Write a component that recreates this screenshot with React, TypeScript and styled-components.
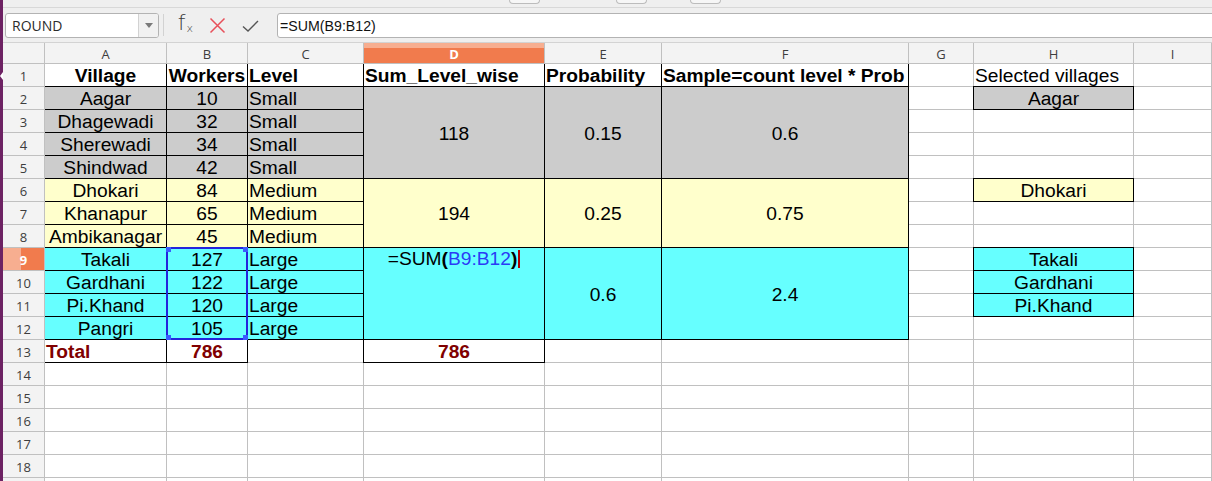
import React from "react";
import styled, { createGlobalStyle, css } from "styled-components";

const GlobalStyle = createGlobalStyle`
  html, body {
    margin: 0;
    padding: 0;
  }
  body {
    font-family: "Liberation Sans", Arial, sans-serif;
    background: #efefef;
    overflow: hidden;
  }
`;

const GRAY = "#cccccc";
const YELLOW = "#ffffcc";
const CYAN = "#66ffff";
const WHITE = "#ffffff";
const LINE = "#c0c0c0";

const Window = styled.div`
  display: flex;
  width: 1212px;
  height: 481px;
  overflow: hidden;
`;

const Launcher = styled.div`
  flex: none;
  width: 3px;
  background: #6d2263;
  display: flex;
  flex-direction: column;
`;

const LauncherArrow = styled.div`
  margin-top: 72px;
  width: 0;
  height: 0;
  border-top: 4px solid transparent;
  border-bottom: 4px solid transparent;
  border-right: 3px solid #ffffff;
`;

const Main = styled.div`
  flex: 1;
  min-width: 0;
  display: flex;
  flex-direction: column;
`;

const Toolbar = styled.div`
  flex: none;
  height: 7px;
  border-bottom: 1px solid #d8d8d8;
  display: flex;
  align-items: flex-start;
`;

const ToolStub = styled.div<{ $offset: number }>`
  margin-left: ${({ $offset }) => $offset}px;
  width: 31px;
  height: 4px;
  box-sizing: border-box;
  border: 1px solid #bcbcbc;
  border-top: none;
  border-radius: 0 0 4px 4px;
  background: #f6f6f6;
`;

const FormulaBar = styled.div`
  flex: none;
  height: 34px;
  border-bottom: 1px solid #d3d3d3;
  display: flex;
  align-items: center;
  padding-left: 2px;
`;

const NameBox = styled.div`
  flex: none;
  width: 154px;
  height: 25px;
  box-sizing: border-box;
  border: 1px solid #b3b3b3;
  border-radius: 3px;
  background: #ffffff;
  display: flex;
  overflow: hidden;
`;

const NameText = styled.div`
  flex: 1;
  padding-left: 6px;
  font-family: "Open Sans", "Liberation Sans", sans-serif;
  font-size: 14px;
  line-height: 23px;
  color: #2b2b2b;
`;

const DropButton = styled.div`
  width: 19px;
  border-left: 1px solid #d2d2d2;
  background: #f1f1f1;
  display: flex;
  align-items: center;
  justify-content: center;
`;

const DropArrow = styled.div`
  width: 0;
  height: 0;
  border-left: 4px solid transparent;
  border-right: 4px solid transparent;
  border-top: 5px solid #7a7a7a;
`;

const Separator = styled.div`
  flex: none;
  width: 1px;
  height: 22px;
  margin-left: 4px;
  background: #d2d2d2;
`;

const IconSlot = styled.div<{ $offset: number }>`
  flex: none;
  width: 17px;
  height: 17px;
  margin-left: ${({ $offset }) => $offset}px;
  display: flex;
  align-items: center;
  justify-content: center;
`;

const FxGlyph = styled.span`
  font-family: "DejaVu Sans", sans-serif;
  font-weight: 200;
  font-size: 22px;
  line-height: 17px;
  color: #3c3c3c;
  white-space: nowrap;

  sub {
    font-size: 11px;
    vertical-align: -2px;
    margin-left: 1px;
  }
`;

const FormulaInput = styled.div`
  flex: 1;
  height: 25px;
  margin-left: 18px;
  margin-right: -4px;
  box-sizing: border-box;
  border: 1px solid #b3b3b3;
  border-radius: 3px;
  background: #ffffff;
  padding-left: 2px;
  font-size: 14.2px;
  line-height: 24px;
  color: #111111;
`;

const Sheet = styled.div`
  flex: none;
  display: grid;
  grid-template-columns: 42px 122px 81px 116px 181px 117px 247px 65px 160px 1fr;
  grid-template-rows: 21px repeat(19, 23px);
  background: #ffffff;
`;

const headerText = css`
  box-sizing: border-box;
  display: flex;
  align-items: center;
  justify-content: center;
  border-right: 1px solid ${LINE};
  border-bottom: 1px solid ${LINE};
  font-family: "Open Sans", "Liberation Sans", sans-serif;
  font-size: 13px;
`;

const Corner = styled.div`
  ${headerText};
  grid-row: 1;
  grid-column: 1;
  background: #f3f3f3;
`;

const ColHead = styled.div<{ $c: number; $active?: boolean }>`
  ${headerText};
  grid-row: 1;
  grid-column: ${({ $c }) => $c + 2};
  padding-top: 1px;
  background: ${({ $active }) =>
    $active
      ? "linear-gradient(to bottom, #f7ae90 0, #f7ae90 5px, #f17b4d 5px)"
      : "#f3f3f3"};
  color: ${({ $active }) => ($active ? "#ffffff" : "#3d3d3d")};
  font-weight: ${({ $active }) => ($active ? 700 : 400)};
`;

const RowHead = styled.div<{ $r: number; $active?: boolean }>`
  ${headerText};
  grid-row: ${({ $r }) => $r + 1};
  grid-column: 1;
  padding-top: 2px;
  background: ${({ $active }) =>
    $active
      ? "linear-gradient(to right, #f7ae90 0, #f7ae90 18px, #f17b4d 18px)"
      : "#f3f3f3"};
  color: ${({ $active }) => ($active ? "#ffffff" : "#3d3d3d")};
  font-weight: ${({ $active }) => ($active ? 700 : 400)};
`;

type Box = "edge" | "full";
type Align = "left" | "center";
type VAlign = "center" | "top";

const Cell = styled.div<{
  $r: number;
  $c: number;
  $span: number;
  $fill: string;
  $align: Align;
  $valign: VAlign;
  $bold?: boolean;
  $total?: boolean;
  $box?: Box;
}>`
  grid-row: ${({ $r }) => $r + 1} / span ${({ $span }) => $span};
  grid-column: ${({ $c }) => $c + 2};
  box-sizing: border-box;
  min-width: 0;
  display: flex;
  flex-direction: column;
  justify-content: ${({ $valign }) => ($valign === "top" ? "flex-start" : "center")};
  align-items: ${({ $align }) => ($align === "center" ? "center" : "flex-start")};
  padding: ${({ $valign }) => ($valign === "top" ? "0" : "2px")} 1px 0;
  background: ${({ $fill }) => $fill};
  border-right: 1px solid ${LINE};
  border-bottom: 1px solid ${LINE};
  font-size: 19.2px;
  line-height: 22px;
  font-weight: ${({ $bold }) => ($bold ? 700 : 400)};
  color: ${({ $total }) => ($total ? "#800000" : "#000000")};
  white-space: nowrap;
  overflow: hidden;

  ${({ $box }) =>
    $box === "edge" &&
    css`
      border-right-color: #000000;
      border-bottom-color: #000000;
    `}

  ${({ $box }) =>
    $box === "full" &&
    css`
      position: relative;
      z-index: 1;
      margin: -1px 0 0 -1px;
      border: 1px solid #000000;
    `}
`;

const Selection = styled.div`
  grid-row: 10 / span 4;
  grid-column: 3;
  position: relative;
  z-index: 2;
  margin: -1px 0 0 -1px;
  border: 2px solid #2424dc;
  pointer-events: none;
`;

const Handle = styled.span<{ $corner: "tl" | "tr" | "bl" | "br" }>`
  position: absolute;
  width: 5px;
  height: 5px;
  background: #3a5cff;
  ${({ $corner }) => ($corner[0] === "t" ? "top: -2px;" : "bottom: -2px;")}
  ${({ $corner }) => ($corner[1] === "l" ? "left: -2px;" : "right: -2px;")}
`;

const Paren = styled.span`
  font-weight: 700;
`;

const RangeRef = styled.span`
  color: #2b3cf5;
`;

const Caret = styled.span`
  display: inline-block;
  width: 2px;
  height: 18px;
  margin-left: 1px;
  vertical-align: -3px;
  background: #b00000;
`;

type Spec = {
  text?: React.ReactNode;
  span?: number;
  fill?: string;
  align?: Align;
  valign?: VAlign;
  bold?: boolean;
  total?: boolean;
  box?: Box;
};

const COLS = ["A", "B", "C", "D", "E", "F", "G", "H", "I"];
// the 19th row only peeks in at the bottom edge, its number is out of view
const ROWS = 19;
const LABELLED_ROWS = 18;

const villages: [string, number, string][] = [
  ["Aagar", 10, "Small"],
  ["Dhagewadi", 32, "Small"],
  ["Sherewadi", 34, "Small"],
  ["Shindwad", 42, "Small"],
  ["Dhokari", 84, "Medium"],
  ["Khanapur", 65, "Medium"],
  ["Ambikanagar", 45, "Medium"],
  ["Takali", 127, "Large"],
  ["Gardhani", 122, "Large"],
  ["Pi.Khand", 120, "Large"],
  ["Pangri", 105, "Large"],
];

const fillFor = (row: number) => (row <= 5 ? GRAY : row <= 8 ? YELLOW : CYAN);

const FormulaEdit = () => (
  <span>
    =SUM<Paren>(</Paren>
    <RangeRef>B9:B12</RangeRef>
    <Paren>)</Paren>
    <Caret />
  </span>
);

const groups = [
  { start: 2, span: 4, sum: "118" as React.ReactNode, prob: "0.15", sample: "0.6" },
  { start: 6, span: 3, sum: "194" as React.ReactNode, prob: "0.25", sample: "0.75" },
  { start: 9, span: 4, sum: <FormulaEdit />, prob: "0.6", sample: "2.4" },
];

const selected: Record<number, string> = {
  2: "Aagar",
  6: "Dhokari",
  9: "Takali",
  10: "Gardhani",
  11: "Pi.Khand",
};

function buildSpecs(): Record<string, Spec> {
  const specs: Record<string, Spec> = {};
  const head = (text: string, align: Align): Spec => ({ text, align, bold: true, box: "edge" });
  specs.A1 = head("Village", "center");
  specs.B1 = head("Workers", "center");
  specs.C1 = head("Level", "left");
  specs.D1 = head("Sum_Level_wise", "left");
  specs.E1 = head("Probability", "left");
  specs.F1 = head("Sample=count level * Prob", "left");
  specs.H1 = { text: "Selected villages" };

  villages.forEach(([name, workers, level], i) => {
    const row = i + 2;
    const fill = fillFor(row);
    specs[`A${row}`] = { text: name, fill, align: "center", box: "edge" };
    specs[`B${row}`] = { text: workers, fill, align: "center", box: "edge" };
    specs[`C${row}`] = { text: level, fill, box: "edge" };
  });

  groups.forEach(({ start, span, sum, prob, sample }) => {
    const fill = fillFor(start);
    const isEditing = typeof sum !== "string";
    specs[`D${start}`] = {
      text: sum,
      span,
      fill,
      align: "center",
      valign: isEditing ? "top" : "center",
      box: "edge",
    };
    specs[`E${start}`] = { text: prob, span, fill, align: "center", box: "edge" };
    specs[`F${start}`] = { text: sample, span, fill, align: "center", box: "edge" };
  });

  Object.entries(selected).forEach(([row, name]) => {
    specs[`H${row}`] = { text: name, fill: fillFor(Number(row)), align: "center", box: "full" };
  });

  specs.A13 = { text: "Total", bold: true, total: true, box: "edge" };
  specs.B13 = { text: "786", bold: true, total: true, align: "center", box: "edge" };
  specs.D13 = { text: "786", bold: true, total: true, align: "center", box: "full" };
  return specs;
}

const specs = buildSpecs();

function renderCells() {
  const covered = new Set<string>();
  const cells: React.ReactNode[] = [];
  for (let r = 1; r <= ROWS; r++) {
    COLS.forEach((col, c) => {
      const key = `${col}${r}`;
      if (covered.has(key)) return;
      const spec = specs[key] ?? {};
      const span = spec.span ?? 1;
      for (let k = 1; k < span; k++) covered.add(`${col}${r + k}`);
      cells.push(
        <Cell
          key={key}
          $r={r}
          $c={c}
          $span={span}
          $fill={spec.fill ?? WHITE}
          $align={spec.align ?? "left"}
          $valign={spec.valign ?? "center"}
          $bold={spec.bold}
          $total={spec.total}
          $box={spec.box}
        >
          {spec.text}
        </Cell>
      );
    });
  }
  return cells;
}

export default function App() {
  return (
    <>
      <GlobalStyle />
      <Window>
        <Launcher>
          <LauncherArrow />
        </Launcher>
        <Main>
          <Toolbar>
            <ToolStub $offset={506} />
            <ToolStub $offset={76} />
            <ToolStub $offset={43} />
          </Toolbar>
          <FormulaBar>
            <NameBox>
              <NameText>ROUND</NameText>
              <DropButton>
                <DropArrow />
              </DropButton>
            </NameBox>
            <Separator />
            <IconSlot $offset={13}>
              <FxGlyph>
                f<sub>x</sub>
              </FxGlyph>
            </IconSlot>
            <IconSlot $offset={15}>
              <svg width="17" height="17" viewBox="0 0 17 17">
                <path d="M1.5 1.5 L15.5 15.5 M15.5 1.5 L1.5 15.5" stroke="#e8505a" strokeWidth="1.5" fill="none" />
              </svg>
            </IconSlot>
            <IconSlot $offset={16}>
              <svg width="17" height="17" viewBox="0 0 17 17">
                <path d="M1 9.5 L6 14 L16 4" stroke="#555555" strokeWidth="1.4" fill="none" />
              </svg>
            </IconSlot>
            <FormulaInput>=SUM(B9:B12)</FormulaInput>
          </FormulaBar>
          <Sheet>
            <Corner />
            {COLS.map((col, c) => (
              <ColHead key={col} $c={c} $active={col === "D"}>
                {col}
              </ColHead>
            ))}
            {Array.from({ length: ROWS }, (_, i) => (
              <RowHead key={i} $r={i + 1} $active={i + 1 === 9}>
                {i + 1 <= LABELLED_ROWS ? i + 1 : null}
              </RowHead>
            ))}
            {renderCells()}
            <Selection>
              <Handle $corner="tl" />
              <Handle $corner="tr" />
              <Handle $corner="bl" />
              <Handle $corner="br" />
            </Selection>
          </Sheet>
        </Main>
      </Window>
    </>
  );
}
